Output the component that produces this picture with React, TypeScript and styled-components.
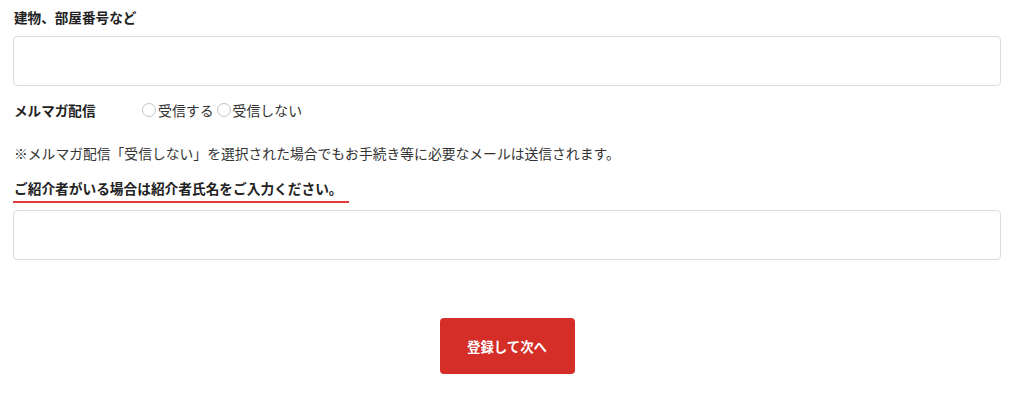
import React, { useState } from 'react';
import styled, { createGlobalStyle } from 'styled-components';

const GlobalStyle = createGlobalStyle`
  body {
    margin: 0;
    background: #fff;
    font-family: "Noto Sans CJK JP", "Noto Sans", sans-serif;
    color: #333;
  }
`

const Form = styled.form`
  display: flex;
  flex-direction: column;
  width: 988px;
  padding: 6px 0 0 13px;
`

const FieldLabel = styled.div`
  font-size: 13.6px;
  font-weight: bold;
  color: #222;
  line-height: 22px;
  padding-left: 1px;
  margin-bottom: 8px;
`

const TextInput = styled.input`
  box-sizing: border-box;
  width: 100%;
  height: 50px;
  border: 1px solid #dcdcdc;
  border-radius: 4px;
  padding: 0 12px;
  font-size: 14px;
  font-family: inherit;
  outline: none;
`

const MailRow = styled.div`
  display: flex;
  align-items: center;
  height: 22px;
  margin-top: 13px;
  padding-left: 1px;
`

const RowLabel = styled.div`
  width: 128px;
  font-size: 13.6px;
  font-weight: bold;
  color: #222;
`

const RadioLabel = styled.label`
  display: flex;
  align-items: center;
  font-size: 13.9px;
  color: #333;
  margin-right: 3px;
  cursor: pointer;
`

const RadioCircle = styled.span<{ $checked: boolean }>`
  box-sizing: border-box;
  width: 14px;
  height: 14px;
  border-radius: 50%;
  border: 1px solid #c4c4c4;
  margin-right: 2px;
  background: ${(p) => (p.$checked ? 'radial-gradient(circle, #333 0 3px, #fff 3.5px)' : '#fff')};
`

const Note = styled.p`
  margin: 21px 0 0 1px;
  font-size: 13.8px;
  line-height: 22px;
  color: #333;
`

const ReferralLabel = styled.div`
  align-self: flex-start;
  margin-top: 13px;
  font-size: 13.7px;
  font-weight: bold;
  color: #222;
  line-height: 22px;
  padding: 0 6px 2px 1px;
  border-bottom: 2px solid #e03a3a;
  margin-bottom: 7px;
`

const ButtonRow = styled.div`
  display: flex;
  justify-content: center;
  margin-top: 58px;
`

const SubmitButton = styled.button`
  width: 135px;
  height: 56px;
  border: none;
  border-radius: 4px;
  background: #d52d27;
  color: #fff;
  font-family: inherit;
  font-size: 13.4px;
  font-weight: bold;
  cursor: pointer;
`

export default function App() {
  const [mail, setMail] = useState('')

  return (
    <>
      <GlobalStyle />
      <Form onSubmit={(e) => e.preventDefault()}>
        <FieldLabel>建物、部屋番号など</FieldLabel>
        <TextInput type="text" />
        <MailRow>
          <RowLabel>メルマガ配信</RowLabel>
          <RadioLabel onClick={() => setMail('yes')}>
            <RadioCircle $checked={mail === 'yes'} />受信する
          </RadioLabel>
          <RadioLabel onClick={() => setMail('no')}>
            <RadioCircle $checked={mail === 'no'} />受信しない
          </RadioLabel>
        </MailRow>
        <Note>※メルマガ配信「受信しない」を選択された場合でもお手続き等に必要なメールは送信されます。</Note>
        <ReferralLabel>ご紹介者がいる場合は紹介者氏名をご入力ください。</ReferralLabel>
        <TextInput type="text" />
        <ButtonRow>
          <SubmitButton type="submit">登録して次へ</SubmitButton>
        </ButtonRow>
      </Form>
    </>
  )
}
